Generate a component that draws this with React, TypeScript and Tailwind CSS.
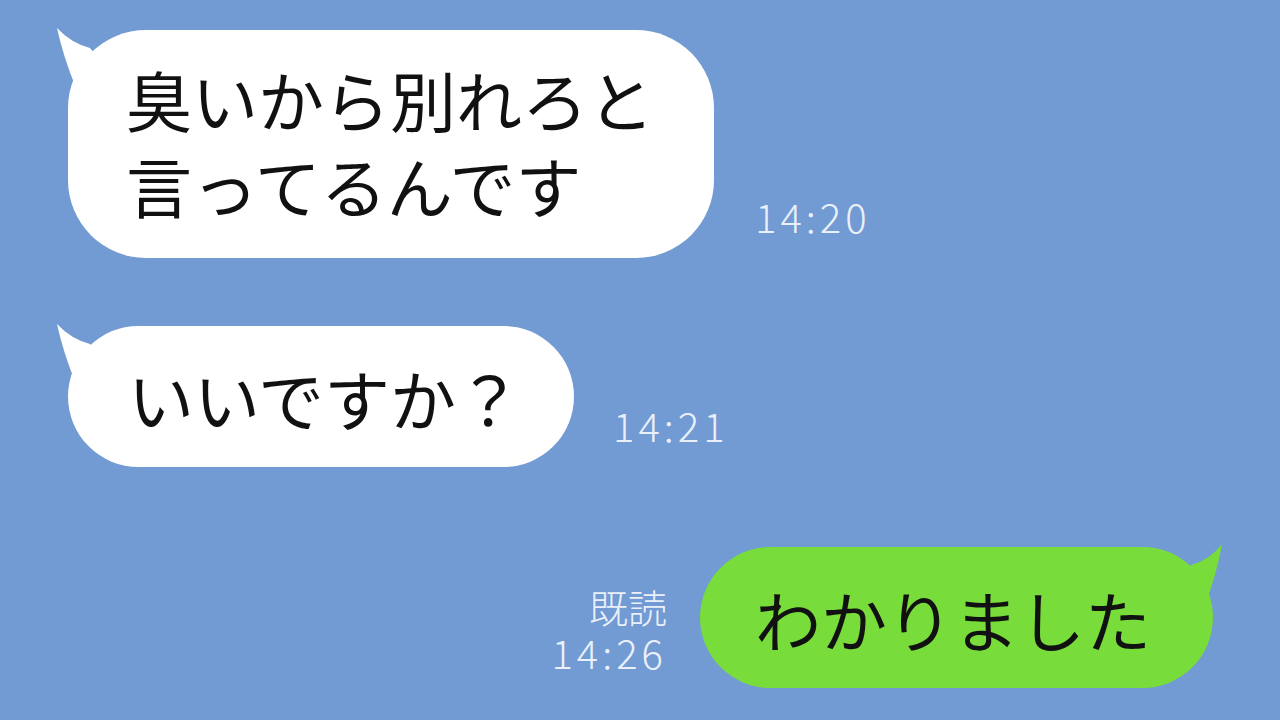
const JP = "font-['Noto_Sans_CJK_JP','Noto_Sans',sans-serif]";

function LeftTail() {
  return (
    <svg
      className="absolute left-[-16px] top-[-8px] h-[80px] w-[70px]"
      viewBox="-16 -8 70 80"
      aria-hidden="true"
    >
      <path d="M-11 -2 Q3 13 22 18 L40 40 L8 58 Q-5 26 -11 -2 Z" fill="#ffffff" />
    </svg>
  );
}

function RightTail() {
  return (
    <svg
      className="absolute right-[-16px] top-[-8px] h-[80px] w-[70px] -scale-x-100"
      viewBox="-16 -8 70 80"
      aria-hidden="true"
    >
      <path d="M-9 -3 Q3 13 22 18 L40 40 L8 58 Q-4 26 -9 -3 Z" fill="#78dc3b" />
    </svg>
  );
}

function Time({ children }: { children: React.ReactNode }) {
  return (
    <div className={`text-[40px] font-light leading-[44px] tracking-[4px] text-[#eaf0f9] ${JP}`}>
      {children}
    </div>
  );
}

export default function App() {
  return (
    <div className={`h-[720px] w-[1280px] overflow-hidden bg-[#729ad3] ${JP}`}>
      {/* incoming 1 */}
      <div className="flex items-end gap-[41px] pl-[68px] pt-[30px]">
        <div className="relative rounded-[78px] bg-white pb-[31px] pl-[58px] pr-[60px] pt-[25px]">
          <LeftTail />
          <p className="relative text-[66px] leading-[86px] text-[#111]">
            臭いから別れろと
            <br />
            言ってるんです
          </p>
        </div>
        <div className="pb-[20px]">
          <Time>14:20</Time>
        </div>
      </div>

      {/* incoming 2 */}
      <div className="mt-[68px] flex items-end gap-[39px] pl-[68px]">
        <div className="relative flex h-[141px] items-center rounded-[72px] bg-white pl-[60px] pr-[52px]">
          <LeftTail />
          <p className="relative text-[66px] leading-[80px] text-[#111]">いいですか？</p>
        </div>
        <div className="pb-[20px]">
          <Time>14:21</Time>
        </div>
      </div>

      {/* outgoing */}
      <div className="mt-[80px] flex items-end justify-end gap-[33px] pr-[67px]">
        <div className="flex flex-col items-end pb-[14px] text-[#eaf0f9]">
          <div className="text-[39px] font-light leading-[48px]">既読</div>
          <Time>14:26</Time>
        </div>
        <div className="relative flex h-[141px] items-center rounded-[72px] bg-[#78dc3b] pl-[55px] pr-[62px]">
          <RightTail />
          <p className="relative text-[66px] leading-[80px] text-[#111]">わかりました</p>
        </div>
      </div>
    </div>
  );
}
